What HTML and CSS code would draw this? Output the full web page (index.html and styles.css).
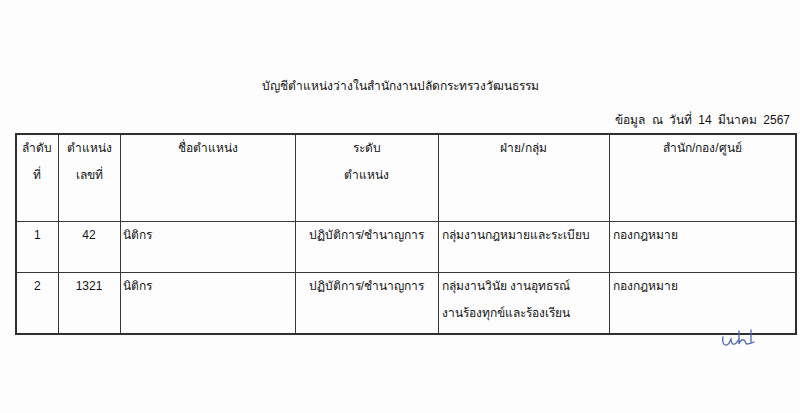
FILE: index.html
```html
<!DOCTYPE html>
<html lang="th">
<head>
<meta charset="utf-8">
<link rel="stylesheet" href="styles.css">
</head>
<body>
<div class="page">
  <h1 class="title">บัญชีตำแหน่งว่างในสำนักงานปลัดกระทรวงวัฒนธรรม</h1>
  <p class="date">ข้อมูล ณ วันที่ 14 มีนาคม 2567</p>
  <table class="grid">
    <colgroup>
      <col class="c1"><col class="c2"><col class="c3"><col class="c4"><col class="c5"><col class="c6">
    </colgroup>
    <thead>
      <tr class="head">
        <th>ลำดับ<br>ที่</th>
        <th>ตำแหน่ง<br>เลขที่</th>
        <th>ชื่อตำแหน่ง</th>
        <th>ระดับ<br>ตำแหน่ง</th>
        <th>ฝ่าย/กลุ่ม</th>
        <th>สำนัก/กอง/ศูนย์</th>
      </tr>
    </thead>
    <tbody>
      <tr class="r1">
        <td class="center">1</td>
        <td class="center">42</td>
        <td class="left name">นิติกร</td>
        <td class="center">ปฏิบัติการ/ชำนาญการ</td>
        <td class="left">กลุ่มงานกฎหมายและระเบียบ</td>
        <td class="left">กองกฎหมาย</td>
      </tr>
      <tr class="r2">
        <td class="center">2</td>
        <td class="center">1321</td>
        <td class="left name">นิติกร</td>
        <td class="center">ปฏิบัติการ/ชำนาญการ</td>
        <td class="left">กลุ่มงานวินัย งานอุทธรณ์<br>งานร้องทุกข์และร้องเรียน</td>
        <td class="left">กองกฎหมาย</td>
      </tr>
    </tbody>
  </table>
  <div class="sign">
    <svg width="36" height="20" viewBox="0 0 36 20" class="sig">
      <path d="M3 9 C2 13 3 18 7 17 C10 16 10 12 11 11 C11 14 12 17 15 16 C17 15 18 13 19 11 M19 3 C19 8 19 12 19 16 C20 13 22 11 24 12 C26 13 25 16 27 16 C30 16 32 15 34 14 M31 2 C31 7 31 11 31 15" fill="none" stroke="#4a68b0" stroke-width="1.3" stroke-linecap="round"/>
    </svg>
  </div>
</div>
</body>
</html>
```
FILE: styles.css
```css
html, body {
  margin: 0;
  padding: 0;
  background: #fdfdfd;
}
.page {
  width: 800px;
  height: 413px;
  font-family: Tahoma, "Liberation Sans", "DejaVu Sans", sans-serif;
  color: #141414;
  font-size: 12px;
}
.title {
  margin: 0;
  padding-top: 77px;
  text-align: center;
  font-size: 12px;
  font-weight: normal;
  line-height: 18px;
}
.date {
  margin: 0;
  padding-top: 16px;
  padding-right: 10px;
  text-align: right;
  font-size: 12px;
  line-height: 18px;
  word-spacing: 3px;
}
.grid {
  margin: 4px 0 0 15px;
  width: 780px;
  border-collapse: collapse;
  table-layout: fixed;
  border: 2px solid #2f2f2f;
}
.c1 { width: 42px; }
.c2 { width: 62px; }
.c3 { width: 175px; }
.c4 { width: 143px; }
.c5 { width: 171px; }
.c6 { width: 187px; }
.grid th, .grid td {
  border: 1.5px solid #383838;
  vertical-align: top;
  padding: 0 3px;
  line-height: 27px;
  font-weight: normal;
}
.grid th {
  text-align: center;
  padding-top: 0;
}
.head { height: 87px; }
.r1 { height: 51px; }
.r2 { height: 62px; }
.grid td { padding-top: 0; }
.center { text-align: center; }
.left { text-align: left; }
.grid td.name { padding-left: 2px; }
.sign {
  display: flex;
  justify-content: flex-end;
  padding-right: 44px;
  margin-top: -7px;
}
```
